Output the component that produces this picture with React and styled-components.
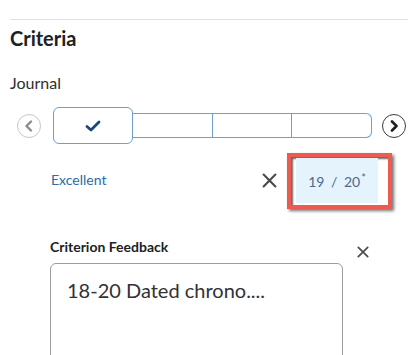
import React from 'react'
import styled, {createGlobalStyle} from 'styled-components'

const GlobalStyle = createGlobalStyle`
  html, body {
    margin: 0;
    padding: 0;
    background: #ffffff;
    overflow: hidden;
  }
  body {
    font-family: Lato, "Noto Sans", sans-serif;
  }
`

const Cross = ({size = 14, color = '#494c4e', weight = 2}) => (
  <svg width={size} height={size} viewBox="0 0 14 14">
    <path d="M1.5 1.5 L12.5 12.5 M12.5 1.5 L1.5 12.5" stroke={color} strokeWidth={weight} strokeLinecap="round" fill="none"/>
  </svg>
)

const App = () => {
  return (
    <Page>
      <GlobalStyle/>
      <Divider/>
      <Title>Criteria</Title>
      <Label>Journal</Label>
      <SliderRow>
        <RoundButton $dark={false}>
          <svg width="10" height="12" viewBox="0 0 10 12">
            <path d="M7 1.5 L2.5 6 L7 10.5" stroke="#8a8d90" strokeWidth="2.4" fill="none" strokeLinecap="round" strokeLinejoin="round"/>
          </svg>
        </RoundButton>
        <Track>
          <SelectedCell>
            <svg width="16" height="12" viewBox="0 0 16 12">
              <path d="M2 6.5 L6 10 L14 2" stroke="#19477a" strokeWidth="2.8" fill="none" strokeLinecap="round" strokeLinejoin="round"/>
            </svg>
          </SelectedCell>
          <Rail>
            <Cell/>
            <Cell/>
            <Cell/>
          </Rail>
        </Track>
        <RoundButton $dark>
          <svg width="10" height="12" viewBox="0 0 10 12">
            <path d="M3 1.5 L7.5 6 L3 10.5" stroke="#202122" strokeWidth="2.6" fill="none" strokeLinecap="round" strokeLinejoin="round"/>
          </svg>
        </RoundButton>
      </SliderRow>
      <ScoreRow>
        <LevelName>Excellent</LevelName>
        <IconButton><Cross size={15}/></IconButton>
        <Highlight>
          <ScoreField>19 / 20<Star>*</Star></ScoreField>
        </Highlight>
      </ScoreRow>
      <FeedbackSection>
        <FeedbackColumn>
          <SubLabel>Criterion Feedback</SubLabel>
          <FeedbackBox readOnly defaultValue="18-20 Dated chrono...."/>
        </FeedbackColumn>
        <CloseButton><Cross size={12}/></CloseButton>
      </FeedbackSection>
    </Page>
  )
}

export default App

const Page = styled.div`
  padding: 19px 0 0 10px;
  color: #202122;
`

const Divider = styled.div`
  height: 1px;
  background-color: #e0e0e0;
`

const Title = styled.h2`
  margin: 6px 0 0;
  font-size: 20px;
  line-height: 24px;
  font-weight: 700;
  color: #202122;
`

const Label = styled.div`
  margin-top: 23px;
  font-size: 16px;
  line-height: 20px;
  color: #2e2f30;
`

const SliderRow = styled.div`
  margin-top: 14px;
  display: flex;
  align-items: center;
  height: 37px;
  padding-left: 7px;
`

const RoundButton = styled.div`
  width: 24px;
  height: 24px;
  box-sizing: border-box;
  border-radius: 50%;
  border: 1.5px solid ${p => p.$dark ? '#3a3b3c' : '#c4c6c8'};
  display: flex;
  align-items: center;
  justify-content: center;
  margin-top: 1px;
`

const Track = styled.div`
  display: flex;
  align-items: center;
  margin: 0 10px 0 12px;
`

const SelectedCell = styled.div`
  width: 80px;
  height: 37px;
  box-sizing: border-box;
  border: 1px solid #6e9fcd;
  border-radius: 6px;
  background: #ffffff;
  display: flex;
  align-items: center;
  justify-content: center;
`

const Rail = styled.div`
  display: flex;
  width: 239px;
  height: 25px;
  box-sizing: border-box;
  border: 1px solid #6e9fcd;
  border-left: none;
  border-radius: 0 6px 6px 0;
`

const Cell = styled.div`
  flex: 1;
  & + & {
    border-left: 1px solid #6e9fcd;
  }
`

const ScoreRow = styled.div`
  margin-top: 9px;
  display: flex;
  align-items: center;
  padding: 0 16px 0 41px;
`

const LevelName = styled.div`
  flex: 1;
  font-size: 14px;
  color: #2a6cab;
  margin-top: -4px;
`

const IconButton = styled.div`
  display: flex;
  margin-right: 10px;
  margin-top: -2px;
`

const Highlight = styled.div`
  width: 105px;
  height: 56px;
  box-sizing: border-box;
  border: 4px solid #ec5a50;
  padding: 1px 10px 2px 5px;
  background: #ffffff;
  box-shadow: 2px 2px 3px rgba(0, 0, 0, 0.55), inset 2px 2px 2px rgba(0, 0, 0, 0.6);
`

const ScoreField = styled.div`
  height: 100%;
  background: #e5f4fc;
  display: flex;
  align-items: center;
  justify-content: center;
  font-size: 14px;
  word-spacing: 3px;
  color: #4a6b8c;
  padding-top: 2px;
  box-sizing: border-box;
`

const Star = styled.span`
  font-size: 11px;
  position: relative;
  top: -4px;
  margin-left: 1px;
`

const FeedbackSection = styled.div`
  margin-top: 29px;
  display: flex;
  padding-left: 40px;
`

const FeedbackColumn = styled.div`
  display: flex;
  flex-direction: column;
  width: 293px;
`

const SubLabel = styled.div`
  font-size: 14px;
  line-height: 17px;
  font-weight: 700;
  color: #202122;
`

const FeedbackBox = styled.textarea`
  margin-top: 8px;
  height: 120px;
  box-sizing: border-box;
  border: 1px solid #9b9c9e;
  border-radius: 6px;
  padding: 14px 16px;
  font-family: Lato, "Noto Sans", sans-serif;
  font-size: 20px;
  line-height: 24px;
  color: #313233;
  resize: none;
  overflow: hidden;
  outline: none;
`

const CloseButton = styled.div`
  margin: 8px 0 0 14px;
  display: flex;
`
